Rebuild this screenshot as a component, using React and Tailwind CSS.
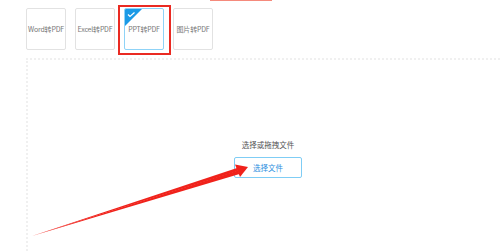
import React from "react";

const cards = [
  { name: "Word转PDF" },
  { name: "Excel转PDF" },
  { name: "PPT转PDF", active: true },
  { name: "图片转PDF" },
];

export default function App() {
  return (
    <div
      className="relative w-[500px] h-[252px] overflow-hidden bg-white"
      style={{ fontFamily: '"Noto Sans CJK SC", "Noto Sans", sans-serif' }}
    >
      {/* top accent line */}
      <div className="ml-[210px] h-px w-[62px] bg-[#f58a7c]" />

      <div className="pl-[26px]">
        {/* type cards */}
        <div className="mt-[7px] flex gap-[9px]">
          {cards.map((c) => (
            <div key={c.name} className="relative">
              <div
                className={`relative flex h-[42px] w-10 items-center justify-center overflow-hidden rounded-[2px] border text-[7px] leading-none tracking-[-0.2px] text-[#777] ${
                  c.active ? "border-[#8fd3f7]" : "border-[#e2e2e2]"
                }`}
              >
                {c.active && (
                  <svg className="absolute left-0 top-0" width="17" height="17" viewBox="0 0 17 17">
                    <path d="M0 0H17L0 17Z" fill="#1a9ae6" />
                    <path d="M3 5.5L5 7.5L9.5 3.5" fill="none" stroke="#fff" strokeWidth="1.2" />
                  </svg>
                )}
                <span className="whitespace-nowrap">{c.name}</span>
              </div>
              {c.active && (
                <div className="absolute -left-[6px] -right-[7px] -top-[3px] -bottom-[5px] border-2 border-[#ea2a22]" />
              )}
            </div>
          ))}
        </div>

        {/* drop area */}
        <div className="mt-[8px] h-[220px] w-[482px] border-l-2 border-t-2 border-dotted border-[#f0f0f0] pt-[80px]">
          <div className="flex flex-col items-center">
            <div className="text-[7.5px] leading-[10px] text-[#555]">选择或拖拽文件</div>
            <div className="mt-[7px] flex h-[21px] w-[68px] items-center justify-center rounded-[2px] border border-[#7fcdf5] text-[7.5px] text-[#2d8fe0]">
              选择文件
            </div>
          </div>
        </div>
      </div>

      {/* annotation arrow */}
      <svg className="pointer-events-none absolute left-0 top-0" width="500" height="252" viewBox="0 0 500 252">
        <path d="M32 236 L238 170.5 L239.5 174 Z" fill="#f0221b" />
        <path d="M32 236 L237 168 L238 171 Z" fill="#f0221b" />
        <path d="M248 167 L235 164.5 L240 177 Z" fill="#f0221b" />
      </svg>
    </div>
  );
}
